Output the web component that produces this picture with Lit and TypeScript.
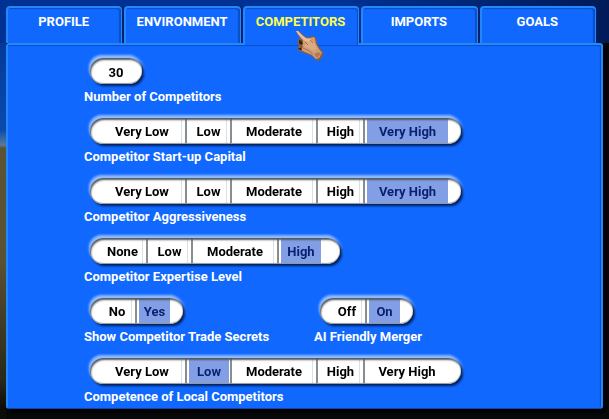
import { LitElement, html, css, svg } from "lit";
import { customElement, property, state } from "lit/decorators.js";
import { classMap } from "lit/directives/class-map.js";

interface Choice {
  text: string;
  size: string;
}

const c = (text: string, size: string): Choice => ({ text, size });

const LEVELS: Choice[] = [
  c("Very Low", "xl"),
  c("Low", "m"),
  c("Moderate", "xl"),
  c("High", "l"),
  c("Very High", "xl"),
];

@customElement("choice-bar")
class ChoiceBar extends LitElement {
  @property() caption = "";
  @property() value = "";
  @property({ type: Boolean }) roomy = false;
  @property({ attribute: false }) choices: Choice[] = [];

  static styles = css`
    :host {
      display: block;
    }
    .frame {
      position: relative;
      width: max-content;
      margin-left: 6px;
      filter: drop-shadow(2px 2px 1px #001f5c) drop-shadow(-1px -3px 1px #8fbcff);
    }
    .pill {
      display: flex;
      height: 26px;
      padding: 0 12px 0 9px;
      box-sizing: border-box;
      border-radius: 13px;
      background: #fff;
      overflow: hidden;
    }
    .pill.roomy {
      padding-right: 18px;
    }
    .shade {
      position: absolute;
      inset: 0;
      border-radius: 13px;
      box-shadow: inset 1px 2px 2px #505860, inset 0 -1px 1px #90989e;
      pointer-events: none;
    }
    .choice {
      position: relative;
      display: flex;
      box-sizing: border-box;
      cursor: pointer;
    }
    .choice + .choice {
      border-left: 2px solid #8a8d90;
    }
    .choice:not(:last-child) {
      box-shadow: inset -3px 0 0 #fff, inset -4px 0 0 #d8e2e2;
    }
    .s { width: 36px; }
    .m { width: 45px; }
    .l { width: 47px; }
    .xl { width: 86px; }
    .choice input {
      position: absolute;
      inset: 0;
      margin: 0;
      opacity: 0;
    }
    .text {
      flex: 1;
      text-align: center;
      line-height: 28px;
      color: #000;
    }
    .on .text {
      margin: 0 1px 0 2px;
      background: #829fe6;
      color: #0a1f70;
    }
    .caption {
      margin-top: 4px;
      line-height: 18px;
      color: #fff;
    }
  `;

  render() {
    return html`
      <div class="frame">
        <div class=${classMap({ pill: true, roomy: this.roomy })} role="radiogroup" aria-labelledby="caption">
          ${this.choices.map(
            (o) => html`<label class=${classMap({ choice: true, [o.size]: true, on: o.text === this.value })}>
              <input
                type="radio"
                name="choice"
                .checked=${o.text === this.value}
                @change=${() => (this.value = o.text)}
              />
              <span class="text">${o.text}</span>
            </label>`
          )}
        </div>
        <div class="shade"></div>
      </div>
      <div class="caption" id="caption">${this.caption}</div>
    `;
  }
}

const hand = svg`
  <path d="M2 1 L5 1 L8 4 L12 7 L16 7 L20 6 L22 8 L23 13 L25 17 L29 22 L29 26 L26 30 L23 31 L20 28 L16 25 L10 23 L5 21 L3 18 L5 16 L3 12 L5 9 L7 8 L3 4 Z" fill="#8a5c3e"/>
  <path d="M2 1 L4 1 L8 5 L12 8 L16 8 L20 7 L21 9 L22 14 L25 19 L28 23 L25 28 L22 29 L18 25 L11 22 L7 20 L9 17 L8 14 L9 10 L4 4 Z" fill="#cf9c74"/>
  <path d="M2 1 L4 1 L9 6 L13 9 L17 9 L15 12 L11 11 L7 8 L4 4 Z" fill="#e6bd96"/>
  <path d="M5 10 L8 11 L9 14 L7 15 L5 13 Z M4 18 L7 18 L8 20 L6 20 Z" fill="#35221a"/>
  <path d="M12 13 L18 10 L21 14 L23 19 L19 21 L15 18 L10 17 Z" fill="#dcab82"/>
  <path d="M11 12 L14 15 M16 10 L19 13 M9 18 L15 21 L19 24" fill="none" stroke="#a9734f"/>
  <path d="M20 24 L25 22 L27 24 L23 28 Z" fill="#b17a55"/>`;

@customElement("app-root")
class AppRoot extends LitElement {
  @state() tab = "COMPETITORS";

  static styles = css`
    :host {
      display: block;
      box-sizing: border-box;
      min-height: 100vh;
      padding: 6px 6px 10px;
      font: bold 13px Roboto, "Liberation Sans", sans-serif;
      background:
        linear-gradient(to right, #003296, #003296 55%, #001b58) top / 100% 43px no-repeat,
        linear-gradient(to bottom, #00318f, #0a4bb0 130px, #5a7a98 145px, #5c5335 148px, #5a5133 260px, #29281a 380px, #0c0c08 410px) left / 6px 100% no-repeat,
        #07080a;
    }
    .tabs {
      display: grid;
      grid-template-columns: repeat(5, 1fr);
      gap: 2px;
      margin-right: 7px;
    }
    .tab-cell {
      display: grid;
      position: relative;
    }
    .tab {
      height: 37px;
      padding: 0 2px 8px 0;
      font: inherit;
      color: #fff;
      background: #1068ff;
      border: 1px solid #2488fa;
      border-width: 2px 1px 0 2px;
      border-radius: 4px 4px 0 0;
      box-shadow: inset -2px 1px 1px #0a50c4, 2px 0 2px #001f66;
    }
    .tab.current {
      position: relative;
      z-index: 1;
      height: 40px;
      margin-bottom: -3px;
      padding-bottom: 11px;
      color: #ffff4a;
      box-shadow: inset -1px 1px 1px #0a50c4;
      clip-path: inset(0 0 1px);
    }
    .hand {
      position: absolute;
      z-index: 2;
      left: 51px;
      top: 24px;
      width: 32px;
      height: 33px;
      pointer-events: none;
    }
    .panel {
      position: relative;
      box-sizing: border-box;
      padding: 13px 12px 2px 76px;
      background: #1068ff;
      border: 2px solid #2488fa;
      border-bottom: 1px solid #0b46b0;
      border-radius: 3px;
      box-shadow: inset -1px 1px 1px #0a50c4, 3px 4px 3px #000;
    }
    .fields {
      display: grid;
      gap: 12px;
    }
    .pair {
      display: grid;
      grid-template-columns: 230px 1fr;
    }
    .count {
      display: block;
      box-sizing: border-box;
      width: 52px;
      height: 26px;
      margin-left: 6px;
      padding: 2px 0 0;
      border: 0;
      border-radius: 13px;
      font: inherit;
      text-align: center;
      color: #000;
      background: #fff;
      box-shadow: inset 1px 2px 2px #505860, inset 0 -1px 1px #90989e;
      filter: drop-shadow(2px 2px 1px #001f5c) drop-shadow(-1px -3px 1px #8fbcff);
    }
    .caption {
      display: block;
      margin-top: 4px;
      line-height: 18px;
      color: #fff;
    }
  `;

  render() {
    return html`
      <div class="tabs" role="tablist">
        ${["PROFILE", "ENVIRONMENT", "COMPETITORS", "IMPORTS", "GOALS"].map(
          (t) => html`<div class="tab-cell" role="presentation">
            <button
              class=${classMap({ tab: true, current: t === this.tab })}
              role="tab"
              aria-selected=${t === this.tab}
              @click=${() => (this.tab = t)}
            >${t}</button>
            ${t === this.tab
              ? html`<svg class="hand" viewBox="0 0 32 33" aria-hidden="true">${hand}</svg>`
              : ""}
          </div>`
        )}
      </div>
      <div class="panel" role="tabpanel">
        <div class="fields">
          <div>
            <input class="count" id="count" type="text" value="30" />
            <label class="caption" for="count">Number of Competitors</label>
          </div>
          <choice-bar caption="Competitor Start-up Capital" value="Very High" .choices=${LEVELS}></choice-bar>
          <choice-bar caption="Competitor Aggressiveness" value="Very High" .choices=${LEVELS}></choice-bar>
          <choice-bar
            roomy
            caption="Competitor Expertise Level"
            value="High"
            .choices=${[c("None", "l"), c("Low", "m"), c("Moderate", "xl"), c("High", "m")]}
          ></choice-bar>
          <div class="pair">
            <choice-bar
              caption="Show Competitor Trade Secrets"
              value="Yes"
              .choices=${[c("No", "s"), c("Yes", "s")]}
            ></choice-bar>
            <choice-bar
              caption="AI Friendly Merger"
              value="On"
              .choices=${[c("Off", "s"), c("On", "s")]}
            ></choice-bar>
          </div>
          <choice-bar caption="Competence of Local Competitors" value="Low" .choices=${LEVELS}></choice-bar>
        </div>
      </div>
    `;
  }
}
